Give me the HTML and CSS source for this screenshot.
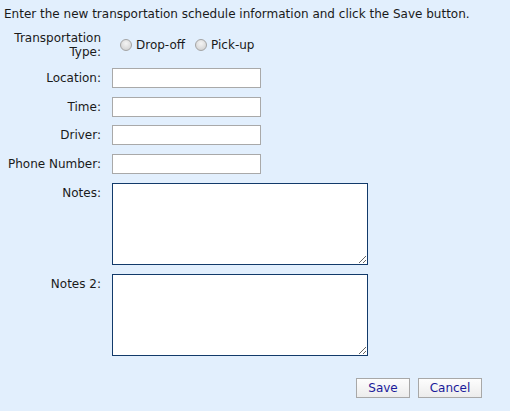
FILE: index.html
```html
<!DOCTYPE html>
<html>
<head>
<meta charset="utf-8">
<link rel="stylesheet" href="styles.css">
</head>
<body>
<div class="page">
  <p class="intro">Enter the new transportation schedule information and click the Save button.</p>
  <form class="form">
    <label class="lbl lbl-two">Transportation<br>Type:</label>
    <div class="radios">
      <label class="radio"><input type="radio" name="t">Drop-off</label>
      <label class="radio"><input type="radio" name="t">Pick-up</label>
    </div>
    <label class="lbl">Location:</label>
    <input class="txt" type="text">
    <label class="lbl">Time:</label>
    <input class="txt" type="text">
    <label class="lbl">Driver:</label>
    <input class="txt" type="text">
    <label class="lbl">Phone Number:</label>
    <input class="txt" type="text">
    <label class="lbl">Notes:</label>
    <textarea class="area"></textarea>
    <label class="lbl">Notes 2:</label>
    <textarea class="area"></textarea>
  </form>
  <div class="actions">
    <button class="btn btn-save" type="button">Save</button>
    <button class="btn btn-cancel" type="button">Cancel</button>
  </div>
</div>
</body>
</html>
```

FILE: styles.css
```css
html, body {
  margin: 0;
  padding: 0;
  background: #e2effd;
}
body {
  font-family: "DejaVu Sans", Verdana, sans-serif;
  font-size: 12px;
  color: #1a1a1a;
  width: 510px;
  height: 411px;
  overflow: hidden;
}
.page {
  padding: 6px 0 0 4px;
}
.intro {
  margin: 0;
  line-height: 16px;
}
.form {
  display: grid;
  grid-template-columns: 97px auto;
  column-gap: 11px;
  row-gap: 8.75px;
  margin-top: 9px;
  justify-items: start;
}
.lbl {
  justify-self: end;
  text-align: right;
  line-height: 14px;
  padding-top: 3px;
}
.lbl-two {
  padding-top: 0;
}
.radios {
  display: flex;
  align-items: center;
  gap: 10px;
  padding-top: 4px;
  padding-left: 8px;
  height: 20px;
}
.radio {
  display: flex;
  align-items: center;
}
.radio input {
  -webkit-appearance: none;
  appearance: none;
  box-sizing: border-box;
  margin: 0 4px 0 0;
  width: 12px;
  height: 12px;
  border-radius: 50%;
  border: 1px solid #a4a4a4;
  background: radial-gradient(circle at 50% 35%, #f4f4f4 0%, #d8d8d8 70%, #c8c8c8 100%);
}
.txt {
  box-sizing: border-box;
  width: 149px;
  height: 20px;
  margin: 0;
  border: 1px solid #a9a9a9;
  background: #fff;
  padding: 1px 2px;
}
.area {
  box-sizing: border-box;
  width: 256px;
  height: 82px;
  margin: 0;
  border: 1px solid #123a6a;
  background: #fff;
  padding: 2px;
  resize: both;
}
.actions {
  display: flex;
  justify-content: flex-end;
  gap: 8px;
  padding-right: 28px;
  margin-top: 22px;
}
.btn {
  font-family: "DejaVu Sans", Verdana, sans-serif;
  font-size: 12px;
  color: #1a1a9a;
  height: 20px;
  padding: 0;
  border: 1px solid #a8a8a8;
  background: linear-gradient(#fdfdfd, #ececec);
  border-radius: 0;
}
.btn-save { width: 54px; }
.btn-cancel { width: 64px; }
```
